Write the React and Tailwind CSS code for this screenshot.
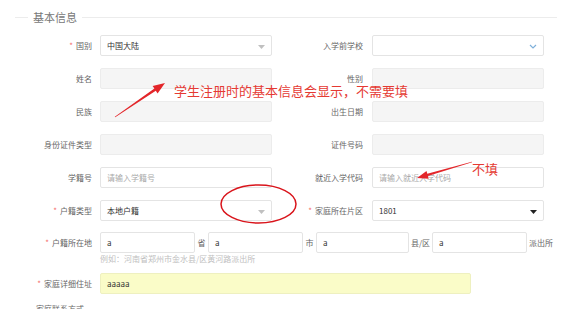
import React from 'react';

const FONT = { fontFamily: '"Noto Sans CJK SC", "Noto Sans", sans-serif' };

function Label({ req, w = 'w-[92px]', children }) {
	return (
		<div className={`${w} shrink-0 text-right text-[8px] leading-none text-[#666]`}>
			{req && <span className="text-[#f56c6c] mr-[3px]">*</span>}
			{children}
		</div>
	);
}

function Caret({ dark }) {
	return (
		<svg width="7" height="4" viewBox="0 0 7 4" className="absolute right-[6px] top-[9px]">
			<path d="M0 0 L7 0 L3.5 4 Z" fill={dark ? '#222' : '#c0c0c0'} />
		</svg>
	);
}

function Box({ value, placeholder, disabled, yellow, caret, chevron, w = 'w-[172px]' }) {
	let bg = 'bg-white border-[#e4e4e4]';
	if (disabled) bg = 'bg-[#f5f5f5] border-[#ececec]';
	if (yellow) bg = 'bg-[#fafcc8] border-[#eef0c0]';
	return (
		<div className={`relative ${w} h-[21px] shrink-0 border rounded-[2px] px-[6px] flex items-center text-[8px] leading-none ${bg}`}>
			{value ? <span className="text-[#333]">{value}</span> : <span className="text-[#aaa]">{placeholder}</span>}
			{caret && <Caret dark={caret === 'dark'} />}
			{chevron && (
				<svg width="8" height="5" viewBox="0 0 8 5" className="absolute right-[6px] top-[8px]">
					<path d="M1 1 L4 4 L7 1" fill="none" stroke="#7fb0da" strokeWidth="1.2" />
				</svg>
			)}
		</div>
	);
}

function Row({ children, mt = 'mt-[12px]' }) {
	return <div className={`flex items-center h-[21px] ${mt}`}>{children}</div>;
}

export default function App() {
	return (
		<div className="relative w-[583px] h-[309px] overflow-hidden bg-white" style={FONT}>
			<div className="flex items-center pl-[15px] pr-[26px] pt-[10px] h-[24px]">
				<div className="w-[13px] h-px bg-[#ececec]" />
				<div className="px-[5px] text-[11px] leading-none text-[#777]">基本信息</div>
				<div className="flex-1 h-px bg-[#ececec]" />
			</div>

			<Row mt="mt-[11px]">
				<Label req>国别</Label>
				<div className="w-[8px]" />
				<Box value="中国大陆" caret="light" />
				<Label w="w-[91px]">入学前学校</Label>
				<div className="w-[9px]" />
				<Box chevron />
			</Row>
			<Row>
				<Label>姓名</Label>
				<div className="w-[8px]" />
				<Box disabled />
				<Label w="w-[91px]">性别</Label>
				<div className="w-[9px]" />
				<Box disabled />
			</Row>
			<Row>
				<Label>民族</Label>
				<div className="w-[8px]" />
				<Box disabled />
				<Label w="w-[91px]">出生日期</Label>
				<div className="w-[9px]" />
				<Box disabled />
			</Row>
			<Row>
				<Label>身份证件类型</Label>
				<div className="w-[8px]" />
				<Box disabled />
				<Label w="w-[91px]">证件号码</Label>
				<div className="w-[9px]" />
				<Box disabled />
			</Row>
			<Row>
				<Label>学籍号</Label>
				<div className="w-[8px]" />
				<Box placeholder="请输入学籍号" />
				<Label w="w-[91px]">就近入学代码</Label>
				<div className="w-[9px]" />
				<Box placeholder="请输入就近入学代码" />
			</Row>
			<Row>
				<Label req>户籍类型</Label>
				<div className="w-[8px]" />
				<Box value="本地户籍" caret="light" />
				<Label req w="w-[91px]">家庭所在片区</Label>
				<div className="w-[9px]" />
				<Box value="1801" caret="dark" />
			</Row>
			<Row mt="mt-[11px]">
				<Label req>户籍所在地</Label>
				<div className="w-[8px]" />
				<Box value="a" w="w-[95px]" />
				<div className="w-[13px] text-center text-[8px] leading-none text-[#666]">省</div>
				<Box value="a" w="w-[95px]" />
				<div className="w-[13px] text-center text-[8px] leading-none text-[#666]">市</div>
				<Box value="a" w="w-[93px]" />
				<div className="w-[23px] text-center text-[8px] leading-none text-[#666]">县/区</div>
				<Box value="a" w="w-[95px]" />
				<div className="pl-[2px] text-[8px] leading-none text-[#666]">派出所</div>
			</Row>
			<div className="mt-[1px] pl-[100px] text-[8px] leading-[10px] text-[#c0c0c0]">例如：河南省郑州市金水县/区黄河路派出所</div>
			<Row mt="mt-[9px]">
				<Label req>家庭详细住址</Label>
				<div className="w-[8px]" />
				<Box value="aaaaa" yellow w="w-[371px]" />
			</Row>
			<div className="mt-[11px] pl-[36px] text-[8px] leading-none text-[#666]">家庭联系方式</div>

			{/* annotations */}
			<div className="absolute left-[174px] top-[84px] text-[13px] leading-none text-[#e53a33]">学生注册时的基本信息会显示，不需要填</div>
			<div className="absolute left-[472px] top-[162px] text-[13px] leading-none text-[#e53a33]">不填</div>
			<svg className="absolute left-0 top-0" width="583" height="309" viewBox="0 0 583 309">
				<polygon points="115.2,117.2 155.8,90.8 157.6,93.4 165,83 152.6,86 154.4,88.6 114.8,116.8" fill="#e3262a" />
				<polygon points="472.1,162.3 427.9,176.1 428.7,178.8 417,178 426.5,171.1 427.3,173.8 471.9,161.7" fill="#e3262a" />
				<ellipse cx="258.5" cy="204" rx="37.5" ry="19" fill="none" stroke="#d9141b" strokeWidth="1.5" />
			</svg>
		</div>
	);
}
